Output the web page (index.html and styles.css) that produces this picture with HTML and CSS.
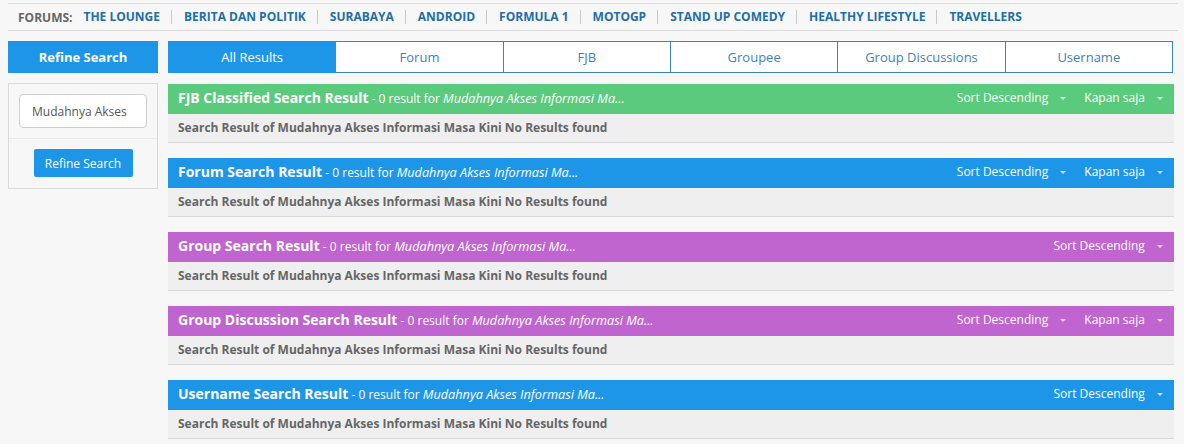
FILE: index.html
```html
<!DOCTYPE html>
<html lang="id">
<head>
<meta charset="UTF-8">
<meta name="viewport" content="width=device-width, initial-scale=1.0">
<title>Search Result</title>
<link rel="stylesheet" href="styles.css">
</head>
<body>

<nav class="forums-bar">
  <span class="forums-label">FORUMS:</span>
  <a href="#">THE LOUNGE</a>
  <a href="#">BERITA DAN POLITIK</a>
  <a href="#">SURABAYA</a>
  <a href="#">ANDROID</a>
  <a href="#">FORMULA 1</a>
  <a href="#">MOTOGP</a>
  <a href="#">STAND UP COMEDY</a>
  <a href="#">HEALTHY LIFESTYLE</a>
  <a href="#">TRAVELLERS</a>
</nav>

<div class="main">
  <aside class="sidebar">
    <div class="sidebar-title">Refine Search</div>
    <div class="sidebar-box">
      <div class="sidebar-row">
        <input type="text" class="search-input" value="Mudahnya Akses">
      </div>
      <div class="sidebar-row">
        <button class="refine-btn">Refine Search</button>
      </div>
    </div>
  </aside>

  <div class="content">
    <div class="tabs">
      <a href="#" class="tab active">All Results</a>
      <a href="#" class="tab">Forum</a>
      <a href="#" class="tab">FJB</a>
      <a href="#" class="tab">Groupee</a>
      <a href="#" class="tab">Group Discussions</a>
      <a href="#" class="tab">Username</a>
    </div>

    <section class="result green">
      <div class="result-head">
        <div class="result-title"><b>FJB Classified Search Result</b> - 0 result for <i>Mudahnya Akses Informasi Ma...</i></div>
        <div class="result-tools">
          <span class="drop">Sort Descending <span class="caret"></span></span>
          <span class="drop">Kapan saja <span class="caret"></span></span>
        </div>
      </div>
      <div class="result-body">Search Result of Mudahnya Akses Informasi Masa Kini No Results found</div>
    </section>

    <section class="result blue">
      <div class="result-head">
        <div class="result-title"><b>Forum Search Result</b> - 0 result for <i>Mudahnya Akses Informasi Ma...</i></div>
        <div class="result-tools">
          <span class="drop">Sort Descending <span class="caret"></span></span>
          <span class="drop">Kapan saja <span class="caret"></span></span>
        </div>
      </div>
      <div class="result-body">Search Result of Mudahnya Akses Informasi Masa Kini No Results found</div>
    </section>

    <section class="result purple">
      <div class="result-head">
        <div class="result-title"><b>Group Search Result</b> - 0 result for <i>Mudahnya Akses Informasi Ma...</i></div>
        <div class="result-tools">
          <span class="drop">Sort Descending <span class="caret"></span></span>
        </div>
      </div>
      <div class="result-body">Search Result of Mudahnya Akses Informasi Masa Kini No Results found</div>
    </section>

    <section class="result purple">
      <div class="result-head">
        <div class="result-title"><b>Group Discussion Search Result</b> - 0 result for <i>Mudahnya Akses Informasi Ma...</i></div>
        <div class="result-tools">
          <span class="drop">Sort Descending <span class="caret"></span></span>
          <span class="drop">Kapan saja <span class="caret"></span></span>
        </div>
      </div>
      <div class="result-body">Search Result of Mudahnya Akses Informasi Masa Kini No Results found</div>
    </section>

    <section class="result blue">
      <div class="result-head">
        <div class="result-title"><b>Username Search Result</b> - 0 result for <i>Mudahnya Akses Informasi Ma...</i></div>
        <div class="result-tools">
          <span class="drop">Sort Descending <span class="caret"></span></span>
        </div>
      </div>
      <div class="result-body">Search Result of Mudahnya Akses Informasi Masa Kini No Results found</div>
    </section>
  </div>
</div>

</body>
</html>
```

FILE: styles.css
```css
body {
  font-family: 'Open Sans', 'Liberation Sans', sans-serif;
  margin: 0;
  padding: 3px 6px 0 8px;
  background: #f7f7f7;
  color: #555;
  font-size: 12px;
}

a { text-decoration: none; }

/* Forums bar */
.forums-bar {
  display: flex;
  align-items: center;
  height: 26px;
  border-top: 1px solid #dcdcdc;
  border-bottom: 1px solid #dcdcdc;
  padding-left: 10px;
  font-weight: bold;
  font-size: 12px;
}

.forums-label {
  color: #666;
  margin-right: 11px;
}

.forums-bar a {
  color: #1f6ea6;
  padding: 0 11px 0 12px;
  border-left: 1px solid #c9c9c9;
  line-height: 14px;
}

.forums-bar a:first-of-type {
  border-left: none;
  padding-left: 0;
}

/* Layout */
.main {
  display: flex;
  gap: 10px;
  margin-top: 10px;
  padding-right: 4px;
}

.sidebar { width: 150px; flex-shrink: 0; }

.sidebar-title {
  background: #1e96e8;
  color: #fff;
  font-weight: bold;
  font-size: 13px;
  height: 32px;
  line-height: 32px;
  text-align: center;
}

.sidebar-box {
  margin-top: 10px;
  border: 1px solid #dadada;
  background: #f7f7f7;
}

.sidebar-row {
  padding: 10px;
  text-align: center;
}

.sidebar-row + .sidebar-row {
  border-top: 1px solid #ebebeb;
  padding-bottom: 11px;
}

.search-input {
  box-sizing: border-box;
  width: 128px;
  height: 34px;
  border: 1px solid #cfcfcf;
  border-radius: 4px;
  background: #fff;
  font-family: inherit;
  font-size: 12px;
  color: #555;
  padding: 0 12px;
}

.refine-btn {
  width: 99px;
  height: 28px;
  border: none;
  border-radius: 2px;
  background: #1e96e8;
  color: #fff;
  font-family: inherit;
  font-size: 12px;
  cursor: pointer;
}

.content { flex: 1; }

/* Tabs */
.tabs {
  display: flex;
  margin-right: 1px;
}

.tab {
  flex: 1;
  height: 30px;
  line-height: 31px;
  text-align: center;
  font-size: 13px;
  color: #3d83b4;
  background: #fff;
  border: 1px solid #3a86b4;
  border-left: none;
}

.tab:first-child { border-left: 1px solid #1e96e8; }

.tab.active {
  background: #1e96e8;
  border-color: #1e96e8;
  color: #fff;
}

/* Result sections */
.result { margin-top: 11px; }
.result + .result { margin-top: 15px; }

.result-head {
  display: flex;
  justify-content: space-between;
  align-items: center;
  box-sizing: border-box;
  height: 30px;
  padding: 0 11px 3px 10px;
  color: #fff;
  font-size: 12px;
}

.result-title b { font-size: 14px; }
.result-title i { font-size: 12.7px; }

.green .result-head { background: #5acb7c; }
.blue .result-head { background: #1e96e8; }
.purple .result-head { background: #c064d0; }

.result-tools { display: flex; gap: 18px; }

.drop { white-space: nowrap; }

.caret {
  display: inline-block;
  width: 0;
  height: 0;
  margin-left: 9px;
  vertical-align: middle;
  border-top: 3px solid rgba(255, 255, 255, 0.75);
  border-left: 3px solid transparent;
  border-right: 3px solid transparent;
}

.result-body {
  height: 28px;
  line-height: 28px;
  padding-left: 10px;
  background: #efefef;
  border-bottom: 1px solid #d8d8d8;
  font-weight: bold;
  color: #666;
  font-size: 12px;
}
```
